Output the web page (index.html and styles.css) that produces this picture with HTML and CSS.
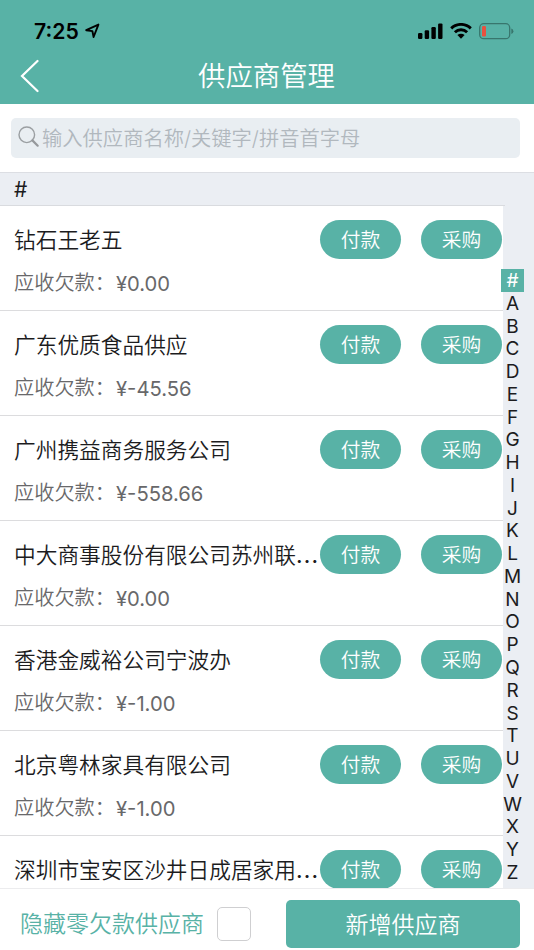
FILE: index.html
```html
<!DOCTYPE html>
<html lang="zh-CN">
<head>
    <title>供应商管理</title>
    <meta charset="UTF-8">
    <meta name="viewport" content="width=device-width, initial-scale=1.0">
    <link rel="stylesheet" href="styles.css">
</head>
<body>
    <header class="header">
        <div class="status-bar">
            <div class="status-time">
                <span>7:25</span>
                <svg width="15" height="16" viewBox="0 0 15 16"><path d="M1.2 7.2L13.4 1.6L8.6 14L7.4 8.1Z" fill="none" stroke="#000" stroke-width="1.9" stroke-linejoin="round"/></svg>
            </div>
            <div class="status-icons">
                <svg width="25" height="16" viewBox="0 0 25 16"><rect x="0" y="10" width="4.4" height="6" rx="1.2"/><rect x="6.7" y="7.2" width="4.4" height="8.8" rx="1.2"/><rect x="13.4" y="4" width="4.4" height="12" rx="1.2"/><rect x="20.1" y="0.4" width="4.4" height="15.6" rx="1.2"/></svg>
                <svg width="22" height="16" viewBox="0 0 22 16"><g fill="none" stroke="#000" stroke-width="2.9"><path d="M1.2 5.4A14 14 0 0 1 20.8 5.4"/><path d="M4.9 9.2A8.7 8.7 0 0 1 17.1 9.2"/></g><path d="M7.4 12.1A5.2 5.2 0 0 1 14.6 12.1L11 15.7Z"/></svg>
                <svg width="35" height="17" viewBox="0 0 35 17"><rect x="0.7" y="0.7" width="30" height="15" rx="4" fill="none" stroke="#38766d" stroke-width="1.3"/><rect x="3" y="3" width="4" height="10.5" rx="1.3" fill="#e8513f"/><path d="M32.3 5.5Q34.4 6.3 34.4 8.2T32.3 11Z" fill="#38766d"/></svg>
            </div>
        </div>
        <div class="nav-bar">
            <svg class="back" width="19" height="34" viewBox="0 0 19 34"><path d="M17.5 2L2 17L17.5 32" fill="none" stroke="#fff" stroke-width="2.2" stroke-linecap="round"/></svg>
            <h1>供应商管理</h1>
        </div>
    </header>

    <div class="search">
        <div class="search-box">
            <svg width="22" height="22" viewBox="0 0 22 22"><circle cx="8.8" cy="8.8" r="7.8" fill="none" stroke="#9b9fa2" stroke-width="1.4"/><path d="M14.4 14.4L19.7 19.7" stroke="#96999c" stroke-width="2.2" stroke-linecap="round"/></svg>
            <span>输入供应商名称/关键字/拼音首字母</span>
        </div>
    </div>

    <div class="content">
        <div class="section-title">#</div>
        <div class="list">
            <div class="supplier">
                <div class="supplier-top"><span class="name">钻石王老五</span><button>付款</button><button>采购</button></div>
                <div class="debt"><span>应收欠款：</span><b>¥0.00</b></div>
            </div>
            <div class="supplier">
                <div class="supplier-top"><span class="name">广东优质食品供应</span><button>付款</button><button>采购</button></div>
                <div class="debt"><span>应收欠款：</span><b>¥-45.56</b></div>
            </div>
            <div class="supplier">
                <div class="supplier-top"><span class="name">广州携益商务服务公司</span><button>付款</button><button>采购</button></div>
                <div class="debt"><span>应收欠款：</span><b>¥-558.66</b></div>
            </div>
            <div class="supplier">
                <div class="supplier-top"><span class="name">中大商事股份有限公司苏州联<i>...</i></span><button>付款</button><button>采购</button></div>
                <div class="debt"><span>应收欠款：</span><b>¥0.00</b></div>
            </div>
            <div class="supplier">
                <div class="supplier-top"><span class="name">香港金威裕公司宁波办</span><button>付款</button><button>采购</button></div>
                <div class="debt"><span>应收欠款：</span><b>¥-1.00</b></div>
            </div>
            <div class="supplier">
                <div class="supplier-top"><span class="name">北京粤林家具有限公司</span><button>付款</button><button>采购</button></div>
                <div class="debt"><span>应收欠款：</span><b>¥-1.00</b></div>
            </div>
            <div class="supplier">
                <div class="supplier-top"><span class="name">深圳市宝安区沙井日成居家用<i>...</i></span><button>付款</button><button>采购</button></div>
            </div>
        </div>
        <!-- letter index lies over the list -->
        <nav class="index">
            <span class="active">#</span><span>A</span><span>B</span><span>C</span><span>D</span><span>E</span><span>F</span><span>G</span><span>H</span><span>I</span><span>J</span><span>K</span><span>L</span><span>M</span><span>N</span><span>O</span><span>P</span><span>Q</span><span>R</span><span>S</span><span>T</span><span>U</span><span>V</span><span>W</span><span>X</span><span>Y</span><span>Z</span>
        </nav>
    </div>

    <footer class="footer">
        <label for="hide-zero">隐藏零欠款供应商</label>
        <input type="checkbox" id="hide-zero">
        <button class="add">新增供应商</button>
    </footer>
</body>
</html>
```
FILE: styles.css
```css
* {
    box-sizing: border-box;
}
body {
    margin: 0;
    height: 950px;
    display: flex;
    flex-direction: column;
    overflow: hidden;
    background-color: #fff;
    color: #1c1c1e;
    font-family: Inter, "Noto Sans CJK SC", sans-serif;
}
svg {
    display: block;
    flex: none;
}
button {
    flex: none;
    padding: 0 0 2px;
    border: none;
    background-color: #58b2a6;
    color: #fff;
    font-family: inherit;
    font-weight: 350;
}
.header {
    height: 104px;
    flex: none;
    background-color: #58b2a6;
}
.status-bar {
    height: 48px;
    padding: 15px 20px 0 34px;
    display: flex;
    justify-content: space-between;
    align-items: center;
    color: #000;
}
.status-time {
    display: flex;
    align-items: center;
    gap: 6px;
    margin-bottom: 2px;
    font-size: 21.2px;
    font-weight: 600;
}
.status-icons {
    display: flex;
    align-items: center;
    gap: 7px;
    margin-bottom: 1px;
}
.nav-bar {
    height: 56px;
    padding: 0 21px 0 20px;
    display: grid;
    grid-template-columns: 19px 1fr 19px;
    align-items: center;
}
h1 {
    margin: 0;
    color: #fff;
    font-size: 27.4px;
    font-weight: 350;
    line-height: 56px;
    text-align: center;
}
.search {
    height: 68px;
    flex: none;
    padding: 14px 14px 0 11px;
}
.search-box {
    height: 40px;
    padding: 0 0 3px 7px;
    display: flex;
    align-items: center;
    gap: 2px;
    border-radius: 5px;
    background-color: #e9eef2;
    color: #b1b8be;
    font-size: 20.3px;
    font-weight: 350;
    white-space: nowrap;
}
.content {
    position: relative;
    flex: 1;
    min-height: 0;
    overflow: hidden;
    border-top: 1px solid #dcdee3;
    background-color: #ebeef3;
}
.section-title {
    width: 505px;
    height: 33px;
    padding-left: 14px;
    border-bottom: 1px solid #d9dbdf;
    font-size: 21px;
    line-height: 34px;
}
.list {
    width: 503px;
    background-color: #fff;
}
.supplier {
    height: 105px;
    padding: 14px 1px 0 14px;
    border-bottom: 1.5px solid #dcdcde;
}
.supplier-top {
    height: 39px;
    display: flex;
    align-items: center;
}
.name {
    flex: 1;
    padding-bottom: 3px;
    font-size: 21.7px;
    font-weight: 350;
    white-space: nowrap;
}
.name i {
    font-style: normal;
    font-weight: 500;
    letter-spacing: 1.2px;
}
.supplier button {
    width: 81px;
    height: 39px;
    border-radius: 20px;
    font-size: 19.8px;
}
.supplier button + button {
    margin-left: 20px;
}
.debt {
    display: flex;
    margin-top: 9px;
    color: #68686a;
    font-size: 20.2px;
    font-weight: 350;
    line-height: 30px;
}
.debt span {
    width: 102px;
    white-space: nowrap;
}
.debt b {
    padding-top: 1px;
    font-weight: 400;
}
.index {
    position: absolute;
    top: 96px;
    left: 501px;
    width: 23px;
    display: flex;
    flex-direction: column;
    font-size: 19px;
    line-height: 22.77px;
    text-align: center;
}
.index span {
    height: 22.77px;
    padding-top: 1px;
}
.index .active {
    background-color: #58b2a6;
    color: #fff;
}
.footer {
    height: 62px;
    flex: none;
    padding: 0 14px 0 20px;
    display: flex;
    align-items: center;
    border-top: 1px solid #ececee;
    color: #58b2a6;
}
.footer label {
    padding-top: 4px;
    font-size: 23px;
    font-weight: 350;
}
.footer input {
    appearance: none;
    width: 34px;
    height: 34px;
    margin: 8px 0 0 13px;
    border: 1.5px solid #cfcfd1;
    border-radius: 5px;
}
.footer .add {
    width: 234px;
    height: 48px;
    margin: 9px 0 0 auto;
    border-radius: 5px;
    font-size: 23px;
}
```
